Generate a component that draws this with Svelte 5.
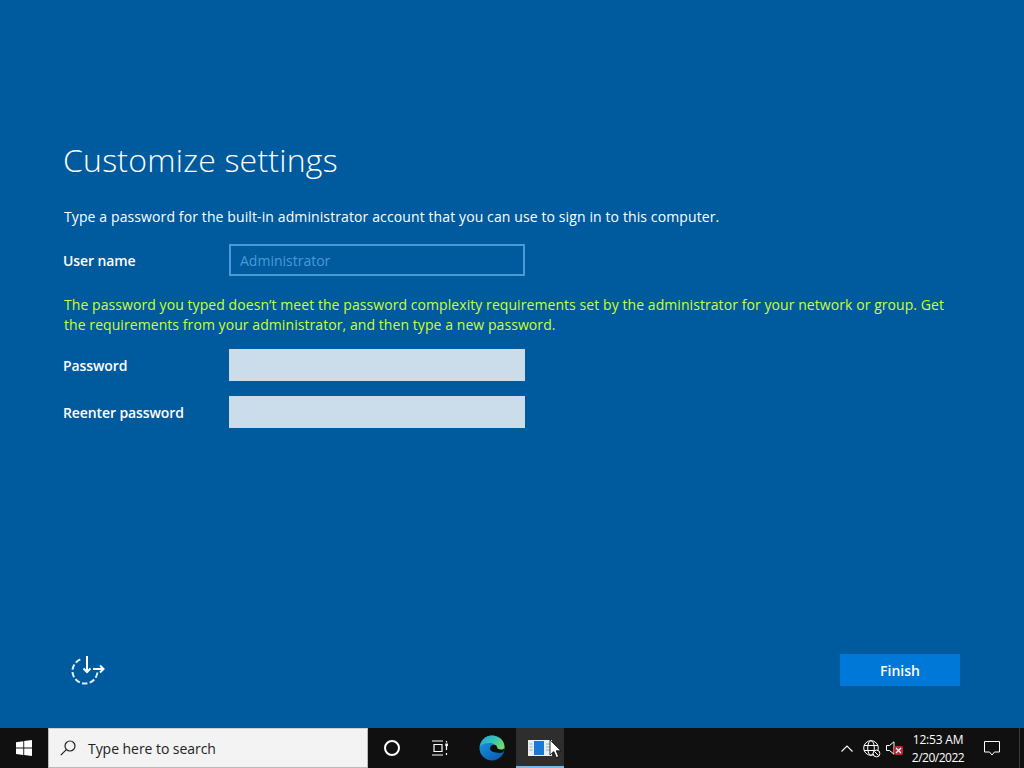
<script>
  const fields = ['Password', 'Reenter password'];
</script>

<div class="screen">
  <main class="setup">
    <div class="content">
      <h1>Customize settings</h1>
      <p class="intro">Type a password for the built-in administrator account that you can use to sign in to this computer.</p>

      <div class="row user">
        <label for="user">User name</label>
        <input id="user" class="disabled" value="Administrator" disabled />
      </div>

      <p class="error">The password you typed doesn’t meet the password complexity requirements set by the administrator for your network or group. Get the requirements from your administrator, and then type a new password.</p>

      {#each fields as field}
        <div class="row pw">
          <label for={field}>{field}</label>
          <input id={field} type="password" />
        </div>
      {/each}
    </div>

    <div class="footer">
      <svg class="access" width="36" height="32" viewBox="0 0 36 32" fill="none" stroke="#fff" stroke-width="2">
        <path d="M26.400 18.500A12.500 12.500 0 1 1 11 4.900" stroke="#dff0fb" stroke-dasharray="5.500 2.300" />
        <path d="M16 2v16M12.500 14.500 16 18l3.500-3.500" />
        <path d="M22 15h10.500M29 11.500l3.500 3.500-3.500 3.500" />
      </svg>
      <button class="finish">Finish</button>
    </div>
  </main>

  <footer class="taskbar">
    <div class="start">
      <svg width="16" height="16" viewBox="0 0 16 16" fill="#fff">
        <path d="M0 2.200 7.300 1.200v6.400H0zM8.200 1.100 16 0v7.600H8.200zM0 8.500h7.300v6.400L0 13.900zM8.200 8.500H16V16l-7.800-1.100z" />
      </svg>
    </div>
    <div class="search">
      <svg width="16" height="16" viewBox="0 0 16 16" fill="none" stroke="#222" stroke-width="1.200">
        <circle cx="10" cy="6" r="5" />
        <path d="M6.300 9.700 .8 15.200" />
      </svg>
      <span>Type here to search</span>
    </div>
    <div class="tb cortana"><span class="ring"></span></div>
    <div class="tb">
      <svg width="18" height="16" viewBox="0 0 18 16" fill="none" stroke="#fff" stroke-width="1.200">
        <path d="M1 1h11M1 15h11M3 4.500h8v7H3zM15.500 1v1.500M15.500 6v4M15.500 13v2" />
        <rect x="14.300" y="3.500" width="2.600" height="2.600" fill="#fff" stroke="none" />
      </svg>
    </div>
    <div class="tb edge">
      <svg width="26" height="26" viewBox="0 0 26 26">
        <defs>
          <linearGradient id="edgeTop" x1="0" y1="0" x2="1" y2=".6">
            <stop offset="0" stop-color="#1f9fd8" />
            <stop offset=".55" stop-color="#38c4b4" />
            <stop offset="1" stop-color="#78dc62" />
          </linearGradient>
          <linearGradient id="edgeLow" x1="0" y1="0" x2=".8" y2="1">
            <stop offset="0" stop-color="#1aa0e0" />
            <stop offset="1" stop-color="#0a58b4" />
          </linearGradient>
        </defs>
        <circle cx="13" cy="13" r="12.500" fill="url(#edgeLow)" />
        <path d="M.8 12C1.800 5 7 .5 13 .5c7 0 12.500 5 12.500 11.500 0 1-.2 1.800-.6 2.500-1 1-2.300 1.500-3.500 1.500-2.500 0-3.900-1.300-3.900-2.500 0-3-3-5.500-6-5.500C6 8 2.300 9 .8 12z" fill="url(#edgeTop)" />
        <path d="M11 13.500c0-2.200 2-3.800 4-3.800 2 0 3 1 3 2.300 0 1.200 1.500 2.500 4 2.500 1.200 0 2.500-.5 3.500-1.500-.3 1.500-.7 2.800-1.300 4-1.200.6-2.500.9-3.500.9-5 0-9.700-1.500-9.700-4.400z" fill="#101010" />
      </svg>
    </div>
    <div class="tb active">
      <svg width="24" height="16" viewBox="0 0 24 16">
        <rect width="24" height="16" fill="#e8eef5" />
        <rect x="6" y="1" width="10" height="14" fill="#1a78d6" />
        <path d="M1.500 4h3M1.500 7h3M1.500 10h3M18 4h4M18 7h4M18 10h4" stroke="#9ab" stroke-width="1" />
      </svg>
    </div>
    <svg class="cursor" width="13" height="20" viewBox="0 0 13 20">
      <path d="M1 1v15l3.800-3.400 2.500 6 2.400-1-2.500-5.800H12z" fill="#fff" stroke="#000" stroke-width=".8" />
    </svg>

    <div class="tray">
      <svg class="chev" width="12" height="7" viewBox="0 0 12 7" fill="none" stroke="#fff" stroke-width="1.100"><path d="M.5 6.500 6 1l5.500 5.500" /></svg>
      <svg class="globe" width="18" height="18" viewBox="0 0 18 18" fill="none" stroke="#fff" stroke-width="1">
        <circle cx="8" cy="8" r="7.300" />
        <ellipse cx="8" cy="8" rx="3.300" ry="7.300" />
        <path d="M1 5.500h14M1 10.500h14" />
        <circle cx="13.500" cy="13.500" r="3.400" fill="#111" />
        <path d="M11.500 11.500l4 4" />
      </svg>
      <div class="speaker">
        <svg width="10" height="14" viewBox="0 0 10 14" fill="none" stroke="#fff" stroke-width="1"><path d="M.5 4.500h3L8 .8v12.400L3.500 9.500h-3z" /></svg>
        <span class="mute">
          <svg width="9" height="9" viewBox="0 0 9 9" stroke="#fff" stroke-width="1.200"><path d="M2 2l5 5M7 2 2 7" /></svg>
        </span>
      </div>
      <div class="clock">
        <span>12:53 AM</span>
        <span class="date">2/20/2022</span>
      </div>
      <div class="notify">
        <svg width="16" height="15" viewBox="0 0 16 15" fill="none" stroke="#fff" stroke-width="1"><path d="M.5.500h15v10.500h-5L8 14l-2.500-3h-5z" /></svg>
      </div>
      <div class="show-desktop"></div>
    </div>
  </footer>
</div>

<style>
  :global(body) {
    margin: 0;
    font-family: "Open Sans", "Liberation Sans", sans-serif;
  }

  .screen {
    width: 1024px;
    height: 768px;
    display: flex;
    flex-direction: column;
    overflow: hidden;
    background: #005a9e;
    color: #fff;
  }

  .setup {
    flex: 1;
    display: flex;
    flex-direction: column;
    justify-content: space-between;
    padding: 140px 64px 42px 63px;
  }

  h1 {
    margin: 0 0 27px;
    font-size: 32px;
    line-height: 40px;
    font-weight: 300;
    letter-spacing: 0.22px;
  }

  .intro {
    margin: 0 0 17px 1px;
    font-size: 14px;
    line-height: 20px;
    letter-spacing: 0.11px;
  }

  .row {
    display: flex;
    align-items: center;
  }

  .row.user {
    height: 32px;
  }

  .row.pw {
    height: 32px;
    margin-bottom: 15px;
  }

  label {
    width: 166px;
    font-size: 14px;
    font-weight: 600;
    letter-spacing: -0.1px;
  }

  input {
    box-sizing: border-box;
    width: 296px;
    height: 32px;
    padding: 0 9px;
    border: 0;
    background: #cbdcea;
    font: inherit;
    font-size: 14px;
  }

  input.disabled {
    background: transparent;
    border: 2px solid #4a9ad9;
    color: #4a9ad9;
    -webkit-text-fill-color: #4a9ad9;
    opacity: 1;
  }

  .error {
    margin: 19px 0 14px 1px;
    font-size: 14px;
    line-height: 20px;
    letter-spacing: 0.07px;
    color: #ccff33;
  }

  .footer {
    display: flex;
    align-items: center;
    justify-content: space-between;
  }

  .access {
    margin-left: 8px;
  }

  .finish {
    width: 120px;
    height: 32px;
    border: 0;
    background: #0078d7;
    color: #fff;
    font: inherit;
    font-size: 14px;
    font-weight: 600;
  }

  .taskbar {
    height: 40px;
    flex: none;
    display: flex;
    align-items: stretch;
    background: #101010;
    position: relative;
  }

  .start {
    width: 48px;
    display: flex;
    align-items: center;
    justify-content: center;
  }

  .search {
    box-sizing: border-box;
    width: 320px;
    display: flex;
    align-items: center;
    gap: 12px;
    padding-left: 11px;
    background: #f3f3f3;
    border: 1px solid #b9b9b9;
    border-top-color: #cfcfcf;
    color: #222;
    font-size: 14px;
    letter-spacing: -0.05px;
  }

  .tb {
    width: 48px;
    display: flex;
    align-items: center;
    justify-content: center;
  }

  .tb.edge {
    margin-left: 4px;
  }

  .ring {
    width: 12px;
    height: 12px;
    border: 2px solid #fff;
    border-radius: 50%;
  }

  .tb.active {
    background: #2e2e2e;
    box-shadow: inset 0 -2px 0 #76b9ed;
  }

  .cursor {
    position: absolute;
    left: 549px;
    top: 11px;
  }

  .tray {
    margin-left: auto;
    display: flex;
    align-items: center;
  }

  .chev {
    margin-right: 10px;
  }

  .globe {
    margin-right: 3px;
    margin-top: 1px;
  }

  .speaker {
    position: relative;
    width: 22px;
    display: flex;
    align-items: center;
    margin-left: 2px;
  }

  .mute {
    position: absolute;
    left: 8px;
    top: 5px;
    width: 9px;
    height: 9px;
    display: flex;
    border-radius: 2px;
    background: #c8202f;
  }

  .clock {
    width: 60px;
    display: flex;
    flex-direction: column;
    align-items: center;
    gap: 2px;
    padding-top: 2px;
    font-size: 12px;
    line-height: 16px;
    letter-spacing: -0.2px;
  }

  .date {
    letter-spacing: -0.5px;
  }

  .notify {
    width: 49px;
    display: flex;
    align-items: center;
    justify-content: center;
    margin-left: -1px;
  }

  .show-desktop {
    box-sizing: border-box;
    width: 5px;
    align-self: stretch;
    margin-left: 3px;
    border-left: 1px solid #3a3a3a;
  }
</style>
